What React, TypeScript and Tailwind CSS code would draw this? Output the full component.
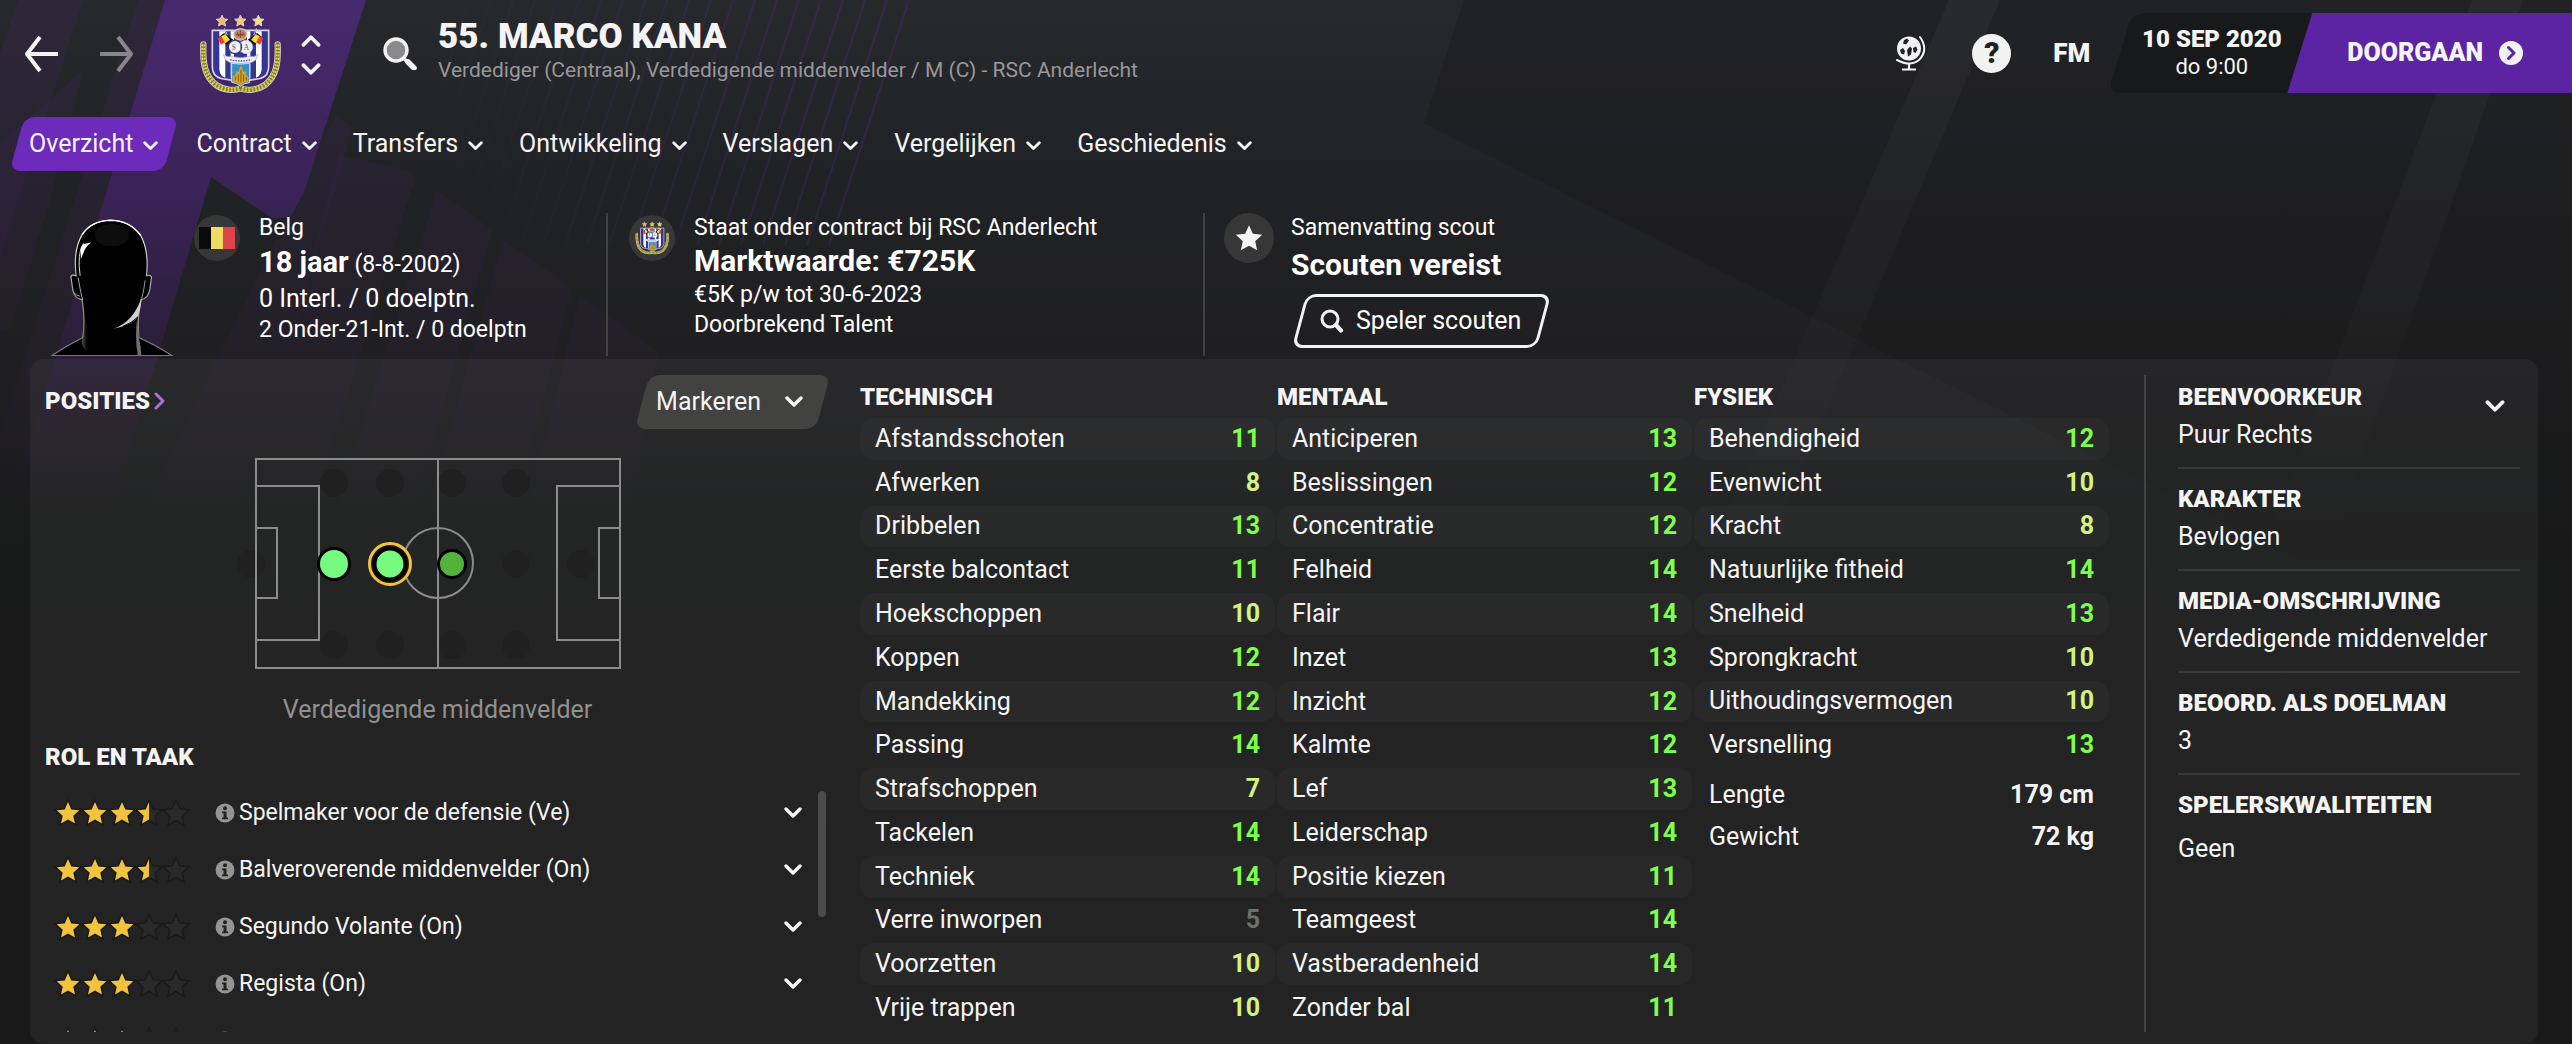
import type { ReactNode } from "react";

type Row = [string, number];

const NAV = ["Overzicht", "Contract", "Transfers", "Ontwikkeling", "Verslagen", "Vergelijken", "Geschiedenis"];

const TECHNICAL: Row[] = [
  ["Afstandsschoten", 11],
  ["Afwerken", 8],
  ["Dribbelen", 13],
  ["Eerste balcontact", 11],
  ["Hoekschoppen", 10],
  ["Koppen", 12],
  ["Mandekking", 12],
  ["Passing", 14],
  ["Strafschoppen", 7],
  ["Tackelen", 14],
  ["Techniek", 14],
  ["Verre inworpen", 5],
  ["Voorzetten", 10],
  ["Vrije trappen", 10],
];

const MENTAL: Row[] = [
  ["Anticiperen", 13],
  ["Beslissingen", 12],
  ["Concentratie", 12],
  ["Felheid", 14],
  ["Flair", 14],
  ["Inzet", 13],
  ["Inzicht", 12],
  ["Kalmte", 12],
  ["Lef", 13],
  ["Leiderschap", 14],
  ["Positie kiezen", 11],
  ["Teamgeest", 14],
  ["Vastberadenheid", 14],
  ["Zonder bal", 11],
];

const PHYSICAL: Row[] = [
  ["Behendigheid", 12],
  ["Evenwicht", 10],
  ["Kracht", 8],
  ["Natuurlijke fitheid", 14],
  ["Snelheid", 13],
  ["Sprongkracht", 10],
  ["Uithoudingsvermogen", 10],
  ["Versnelling", 13],
];

const ROLES: Row[] = [
  ["Spelmaker voor de defensie (Ve)", 3.5],
  ["Balveroverende middenvelder (On)", 3.5],
  ["Segundo Volante (On)", 3],
  ["Regista (On)", 3],
  ["", 3],
];

const FACTS = [
  ["BEENVOORKEUR", "Puur Rechts"],
  ["KARAKTER", "Bevlogen"],
  ["MEDIA-OMSCHRIJVING", "Verdedigende middenvelder"],
  ["BEOORD. ALS DOELMAN", "3"],
];

function valueColor(v: number) {
  if (v > 10) return "text-[#7dff4b]";
  if (v > 6) return "text-[#d3f284]";
  return "text-[#6f6f6f]";
}

const LINES = Array.from({ length: 21 }, (_, i) => 469 + i * 22);

function Backdrop() {
  return (
    <svg
      className="absolute inset-0 -z-10 h-full w-full"
      viewBox="0 0 2572 1044"
      preserveAspectRatio="none"
      aria-hidden="true"
    >
      <defs>
        <linearGradient id="base" x1="0" y1="0" x2="0" y2="1">
          <stop offset="0" stopColor="#27282c" />
          <stop offset="0.18" stopColor="#212225" />
          <stop offset="0.34" stopColor="#1f1f21" />
          <stop offset="0.52" stopColor="#191a1a" />
          <stop offset="1" stopColor="#191919" />
        </linearGradient>
        <linearGradient id="band" gradientUnits="userSpaceOnUse" x1="0" y1="0" x2="0" y2="540">
          <stop offset="0" stopColor="#48296f" />
          <stop offset="0.35" stopColor="#3a2357" />
          <stop offset="0.66" stopColor="#2a1e38" />
          <stop offset="1" stopColor="#191919" stopOpacity="0" />
        </linearGradient>
        <linearGradient id="faint" gradientUnits="userSpaceOnUse" x1="0" y1="0" x2="0" y2="520">
          <stop offset="0" stopColor="#40265c" stopOpacity="0.28" />
          <stop offset="0.6" stopColor="#36224a" stopOpacity="0.2" />
          <stop offset="1" stopColor="#36224a" stopOpacity="0" />
        </linearGradient>
        <linearGradient id="line" gradientUnits="userSpaceOnUse" x1="450" y1="220" x2="910" y2="0">
          <stop offset="0" stopColor="#3d2757" stopOpacity="0" />
          <stop offset="1" stopColor="#3d2757" />
        </linearGradient>
        <linearGradient id="stripe" gradientUnits="userSpaceOnUse" x1="0" y1="0" x2="0" y2="560">
          <stop offset="0" stopColor="#ffffff" stopOpacity="0.035" />
          <stop offset="1" stopColor="#ffffff" stopOpacity="0" />
        </linearGradient>
      </defs>
      <rect width="2572" height="1044" fill="url(#base)" />
      <path d="M1464 0H2572V560H2300L1424 123Z" fill="#141416" fillOpacity="0.28" />
      <path d="M1949 0H2000L1780 520H1725Z" fill="url(#stripe)" />
      <path d="M2472 0H2523L2340 520H2275Z" fill="url(#stripe)" />
      <path d="M18 0H83L-30 350H-100Z" fill="url(#faint)" />
      <path d="M138 0H165L10 530H-30Z" fill="url(#faint)" />
      <path d="M83 70L50 200L10 330H-30L0 145Z" fill="url(#faint)" />
      <path d="M165 0H366L304 192L290 218L272 218L211 177L103 540H0Z" fill="url(#band)" />
      <path d="M336 115L352 128L238 520H140Z" fill="url(#faint)" />
      <path d="M340 155L413 172L415 178L308 520H240Z" fill="url(#faint)" />
      <path d="M437 190L492 230L400 560H320Z" fill="url(#faint)" />
      <path d="M503 240L572 288L500 560H415Z" fill="url(#faint)" />
      <path d="M580 296L658 352L620 560H515Z" fill="url(#faint)" />
      {LINES.map((x) => (
        <line key={x} x1={x} y1="0" x2={x - 80} y2="245" stroke="url(#line)" strokeWidth="2" strokeOpacity="0.75" />
      ))}
    </svg>
  );
}

function Chevron({ className = "h-[10px] w-[14px]", up = false }: { className?: string; up?: boolean }) {
  return (
    <svg className={`shrink-0 ${className}`} viewBox="0 0 18 12" fill="none" aria-hidden="true">
      <path
        d={up ? "M2 10L9 3L16 10" : "M2 2L9 9L16 2"}
        stroke="currentColor"
        strokeWidth="3.4"
        strokeLinecap="round"
        strokeLinejoin="round"
      />
    </svg>
  );
}

const STAR = "M12 1l3.3 7.4 8 .9-6 5.4 1.7 7.9L12 18.600l-7 4 1.700-7.900-6-5.400 8-.900z";

function Crest({ className }: { className: string }) {
  return (
    <svg className={className} viewBox="55 38 246 246" role="img" aria-label="RSC Anderlecht">
      <defs>
        <path id="laurel" d="M68 132C66 190 72 228 106 254C130 270 160 272 179 264" />
        <path id="laurel-r" d="M291 132C293 190 287 228 253 254C229 270 199 272 180 264" />
      </defs>
      <g fill="none" strokeLinecap="round">
        <g stroke="#cfcbc6" strokeWidth="19">
          <use href="#laurel" />
          <use href="#laurel-r" />
        </g>
        <g stroke="#77732c" strokeWidth="13">
          <use href="#laurel" />
          <use href="#laurel-r" />
        </g>
        <g stroke="#e2d94e" strokeWidth="12" strokeLinecap="butt" strokeDasharray="6 4">
          <use href="#laurel" />
          <use href="#laurel-r" />
        </g>
        <g stroke="#8f8a2c" strokeWidth="2">
          <use href="#laurel" />
          <use href="#laurel-r" />
        </g>
      </g>
      <path
        d="M95 90H264V198Q264 236 222 237Q190 240 180 252Q168 240 138 237Q95 236 95 198Z"
        fill="#34368f"
        stroke="#d7d3e2"
        strokeWidth="5"
      />
      <path d="M116 93H134V232Q118 226 116 208Z" fill="#fff" />
      <path d="M243 93H226V232Q241 226 243 208Z" fill="#fff" />
      <path d="M150 93H160V232H150ZM199 93H209V232H199Z" fill="#fff" />
      <path d="M112 112L130 98L158 118L138 134Z" fill="#111" />
      <path d="M120 109L134 101L148 118L132 130Z" fill="#f4d93c" />
      <path d="M111 114L122 107L132 126L121 133Z" fill="#e8403a" />
      <path d="M247 112L229 98L201 118L221 134Z" fill="#111" />
      <path d="M239 109L225 101L211 118L227 130Z" fill="#f4d93c" />
      <path d="M248 114L237 107L227 126L238 133Z" fill="#e8403a" />
      <path d="M131 84L140 104M228 84L219 104" stroke="#c9c6cf" strokeWidth="3" />
      <ellipse cx="179" cy="102" rx="20" ry="17" fill="#b98868" stroke="#d6d0cc" strokeWidth="4" />
      <path d="M166 103h26M179 90v22M170 96l4 12M188 96l-4 12" stroke="#7e3f33" strokeWidth="3" />
      <path d="M164 115h30" stroke="#e2a23c" strokeWidth="4" />
      <circle cx="196" cy="140" r="20" fill="#f2f2f6" stroke="#c9cbd8" strokeWidth="2" />
      <circle cx="163" cy="140" r="20" fill="#f2f2f6" stroke="#2c3a78" strokeWidth="4" />
      <text x="153" y="148" fontFamily="Liberation Serif, serif" fontSize="23" fill="#3c4a94">
        S
      </text>
      <text x="189" y="148" fontFamily="Liberation Serif, serif" fontSize="22" fill="#3c4a94">
        A
      </text>
      <path d="M180 122V158" stroke="#6b7190" strokeWidth="3" />
      <path
        d="M128 162Q140 172 150 168Q180 176 210 168Q220 172 232 162L226 178L214 186Q180 194 146 186L134 178Z"
        fill="#f0eff5"
        stroke="#a7a4c6"
        strokeWidth="2"
      />
      <path d="M148 178Q180 186 212 178" stroke="#5359a8" strokeWidth="4" strokeDasharray="5 3" fill="none" />
      <path d="M153 189Q180 194 207 189V247Q190 248 180 257Q168 248 153 246Z" fill="#3391c9" stroke="#d7d3e2" strokeWidth="3" />
      <path
        d="M156 245V228L164 224L168 212L174 216L178 198L184 200L187 214L194 212L196 224L203 230V244Q190 246 180 253Q168 246 156 245Z"
        fill="#dba325"
      />
      <path d="M164 240V228M173 244V222M181 247V208M189 244V222M197 240V230" stroke="#6f4c12" strokeWidth="2.5" />
      {[124, 179, 233].map((cx, i) => (
        <path
          key={cx}
          transform={`translate(${cx - 18} 43) scale(1.5)`}
          d={STAR}
          fill={["#f3b955", "#f7ca5f", "#f9e072"][i]}
          stroke="#dcd5d2"
          strokeWidth="2"
        />
      ))}
    </svg>
  );
}

function Head() {
  return (
    <svg className="mt-[6px] block h-[137px] w-[122px]" viewBox="93 55 366 413" role="img" aria-label="Marco Kana">
      <defs>
        <linearGradient id="rim" x1="0" y1="0" x2="0" y2="1">
          <stop offset="0" stopColor="#fff" />
          <stop offset="0.5" stopColor="#a8a8a8" />
          <stop offset="1" stopColor="#777" />
        </linearGradient>
        <linearGradient id="neck" x1="0" y1="0" x2="1" y2="0">
          <stop offset="0" stopColor="#888" stopOpacity="0.7" />
          <stop offset="1" stopColor="#000" stopOpacity="0" />
        </linearGradient>
        <filter id="soft">
          <feGaussianBlur stdDeviation="2" />
        </filter>
      </defs>
      <path
        d="M94 467Q140 436 188 412Q196 360 186 298Q164 296 158 270L152 228Q156 222 168 226Q158 150 186 102Q214 60 272 58Q330 60 362 104Q388 150 380 226Q392 222 395 230L390 268Q384 296 364 298Q352 340 357 412Q410 436 458 467Z"
        fill="#000"
        stroke="url(#rim)"
        strokeWidth="3.5"
      />
      <path d="M186 102Q214 60 272 59Q330 60 362 104" fill="none" stroke="#fff" strokeWidth="4" />
      <path d="M180 226Q170 160 190 128" fill="none" stroke="#ddd" strokeWidth="3" filter="url(#soft)" />
      <path d="M182 140L190 130L214 126Q198 136 192 152L182 176Z" fill="#fff" filter="url(#soft)" />
      <path d="M174 232Q182 280 188 300M160 276Q168 286 180 288" fill="none" stroke="#aaa" strokeWidth="3" />
      <path d="M376 240Q372 270 366 294" fill="none" stroke="#999" strokeWidth="3" />
      <path
        d="M280 386Q340 366 366 290Q362 330 354 350Q346 364 320 374Q298 384 280 386Z"
        fill="#d0d0d0"
        filter="url(#soft)"
      />
      <path d="M310 378Q340 366 354 350" fill="none" stroke="#000" strokeWidth="3" />
      <path d="M187 410Q180 440 204 458L206 400L192 340Z" fill="url(#neck)" />
      <path d="M352 350L357 412Q364 440 364 466H354Q344 420 352 350Z" fill="#6f6f6f" filter="url(#soft)" />
      <ellipse cx="275" cy="104" rx="52" ry="34" fill="#0b0b0b" filter="url(#soft)" />
    </svg>
  );
}

function SearchLens({ className, fill }: { className: string; fill: string }) {
  return (
    <svg className={className} viewBox="0 0 34 34" aria-hidden="true">
      <circle cx="13" cy="14" r="11" fill={fill} stroke="#f2f2f2" strokeWidth="3.4" />
      <path d="M21.500 23L24 25.500" stroke="#f2f2f2" strokeWidth="3.500" />
      <path d="M25 26L31 32" stroke="#f2f2f2" strokeWidth="5.500" strokeLinecap="round" />
    </svg>
  );
}

function Globe() {
  return (
    <svg className="h-9 w-8" viewBox="0 0 32 36" fill="none" aria-hidden="true">
      <circle cx="14" cy="13.500" r="12" fill="#f2f2f2" />
      <path
        d="M9 5l3-1.500 2 2-3 4-3-1zM5 15l3-2 2 3-1 3.500-3-1zM12 15l3-3.500 2 2-1 6-3 2zM18 13l3-1.500 1.500 3-2 3.500-2-1z"
        fill="#212225"
      />
      <path
        d="M25 2Q34 15 24 25Q15 32 2 25"
        stroke="#f2f2f2"
        strokeWidth="2"
        strokeLinecap="round"
      />
      <path d="M14 28V34M7 34.500H21" stroke="#f2f2f2" strokeWidth="2.200" />
    </svg>
  );
}

function Stars({ value }: { value: number }) {
  return (
    <span className="flex gap-[3px]" role="img" aria-label={`${value} van 5 sterren`}>
      {[0, 1, 2, 3, 4].map((i) => {
        const part = Math.min(1, Math.max(0, value - i));
        return (
          <svg key={i} className="h-6 w-6 overflow-visible" viewBox="0 0 24 24" aria-hidden="true">
            <path d={STAR} fill={part === 1 ? "#f2c33f" : "#2a2a2a"} stroke="#1a1a1a" strokeWidth="3" paintOrder="stroke" />
            {part === 0.5 && <path d="M12 1V18.600l-7 4 1.700-7.900-6-5.400 8-.900z" fill="#f2c33f" />}
          </svg>
        );
      })}
    </span>
  );
}

const EMPTY_SPOTS: [number, number][] = [
  [83, 25],
  [139, 25],
  [201, 25],
  [265, 25],
  [83, 187],
  [139, 187],
  [201, 187],
  [265, 187],
  [0, 106],
  [265, 106],
  [330, 106],
];

function Pitch() {
  return (
    <svg className="mx-auto block h-[212px] w-[394px]" viewBox="-14 0 394 212" fill="none" role="img" aria-label="Posities op het veld">
      {EMPTY_SPOTS.map(([x, y]) => (
        <circle key={`${x}-${y}`} cx={x} cy={y} r="14" fill="#1f1f1f" fillOpacity="0.8" />
      ))}
      <g stroke="#8c8c8c" strokeWidth="2">
        <rect x="5" y="1" width="364" height="209" />
        <path d="M187 1V210M5 28H68V182H5M5 70H26V140H5M369 28H306V182H369M369 70H348V140H369" />
        <circle cx="187" cy="105" r="35" />
      </g>
      <circle cx="83" cy="106" r="15.500" fill="#76fb80" stroke="#000" strokeWidth="3" />
      <circle cx="139" cy="106" r="20.500" fill="#1a1a1a" stroke="#f2c33f" strokeWidth="3" />
      <circle cx="139" cy="106" r="15.500" fill="#76fb80" stroke="#000" strokeWidth="4" />
      <circle cx="201" cy="106" r="13.500" fill="#53b23a" stroke="#000" strokeWidth="3" />
    </svg>
  );
}

function AttributeTable({ title, rows, children }: { title: string; rows: Row[]; children?: ReactNode }) {
  return (
    <section className="min-w-0 flex-1">
      <h2 className="h-[43px] pt-2 text-[24px] leading-7 font-black">{title}</h2>
      <table
        className={`w-full border-separate border-spacing-0 text-[25px] leading-7 ${rows.length === 14 ? "h-[613px]" : "h-[350px]"}`}
        aria-label={title}
      >
        <tbody>
          {rows.map(([name, v], i) => (
            <tr key={name}>
              <th
                scope="row"
                className={`rounded-l-[14px] border-b-2 border-transparent bg-clip-padding py-0 pl-[15px] text-left font-normal ${i % 2 === 0 ? "bg-white/[0.025]" : ""}`}
              >
                {name}
              </th>
              <td
                className={`rounded-r-[14px] border-b-2 border-transparent bg-clip-padding py-0 pr-[15px] text-right font-bold ${valueColor(v)} ${i % 2 === 0 ? "bg-white/[0.025]" : ""}`}
              >
                {v}
              </td>
            </tr>
          ))}
        </tbody>
      </table>
      {children}
    </section>
  );
}

function InfoIcon() {
  return (
    <svg className="h-5 w-5 shrink-0" viewBox="0 0 20 20" aria-hidden="true">
      <circle cx="10" cy="10" r="9.500" fill="#949494" />
      <circle cx="10" cy="5.200" r="2" fill="#232323" />
      <path d="M7 8.500h4.500v6h1.500v1.800H7v-1.800h1.500v-4.200H7z" fill="#232323" />
    </svg>
  );
}

export default function App() {
  return (
    <div className="relative isolate flex h-screen flex-col overflow-hidden bg-[#191919] font-['Roboto',sans-serif] text-[#f4f4f4]">
      <Backdrop />

      <header className="flex h-[106px] shrink-0 items-start pl-[23px]">
        <button type="button" aria-label="Terug" className="mt-[35px] text-[#f4f4f4]">
          <svg className="h-[38px] w-9" viewBox="0 0 36 38" fill="none" stroke="currentColor" strokeWidth="4">
            <path d="M17 2L4 19L17 36M4 19H35" strokeLinejoin="round" />
          </svg>
        </button>
        <button type="button" aria-label="Vooruit" className="mt-[35px] ml-10 text-[#88858c]">
          <svg className="h-[38px] w-9" viewBox="0 0 36 38" fill="none" stroke="currentColor" strokeWidth="4">
            <path d="M19 2L32 19L19 36M32 19H1" strokeLinejoin="round" />
          </svg>
        </button>
        <Crest className="mt-[13px] ml-16 h-[82px] w-[82px]" />
        <div className="mt-[34px] ml-[20px] flex flex-col gap-4">
          <button type="button" aria-label="Vorige speler" className="flex">
            <Chevron up className="h-[13px] w-5" />
          </button>
          <button type="button" aria-label="Volgende speler" className="flex">
            <Chevron className="h-[13px] w-5" />
          </button>
        </div>
        <button type="button" aria-label="Zoeken" className="mt-[36px] ml-[62px]">
          <SearchLens className="h-[34px] w-[34px]" fill="#8a8a8d" />
        </button>
        <div className="ml-[21px] pt-4">
          <h1 className="text-[35px] leading-[42px] font-black">55. MARCO KANA</h1>
          <p className="text-[21px] leading-6 text-[#98989a]">
            Verdediger (Centraal), Verdedigende middenvelder / M (C) - RSC Anderlecht
          </p>
        </div>

        <div className="mt-[13px] ml-auto flex h-20 items-center">
          <button type="button" aria-label="Wereld" className="mr-[45px]">
            <Globe />
          </button>
          <button
            type="button"
            aria-label="Help"
            className="flex h-[39px] w-[39px] items-center justify-center rounded-full bg-[#f2f2f2] text-[30px] leading-8 font-black text-[#212225]"
          >
            ?
          </button>
          <button type="button" className="ml-[42px] text-[26px] leading-7 font-black">
            FM
          </button>
          <div className="relative isolate ml-5 flex h-20 w-[203px] flex-col items-center justify-center before:absolute before:inset-y-0 before:-right-3 before:left-[10px] before:-z-10 before:-skew-x-[17deg] before:rounded-l-xl before:bg-[#18191a]">
            <span className="text-[24px] leading-7 font-black">10 SEP 2020</span>
            <span className="text-[22px] leading-7">do 9:00</span>
          </div>
          <button
            type="button"
            className="-ml-[26px] flex h-20 items-center gap-4 bg-[#5c24a3] pr-[49px] pl-[60px] text-[25px] font-black [clip-path:polygon(25px_0,100%_0,100%_100%,0_100%)]"
          >
            DOORGAAN
            <svg className="h-6 w-6" viewBox="0 0 24 24" fill="none" aria-hidden="true">
              <circle cx="12" cy="12" r="12" fill="#f2f2f2" />
              <path d="M9.500 6.500L15 12L9.500 17.500" stroke="#5c24a3" strokeWidth="3" strokeLinecap="round" strokeLinejoin="round" />
            </svg>
          </button>
        </div>
      </header>

      <nav className="mt-[11px] flex h-[54px] shrink-0 pl-[11px] text-[25px] leading-8" aria-label="Speler">
        {NAV.map((label, i) => (
          <button
            key={label}
            type="button"
            className={`relative isolate flex items-center gap-[10px] px-[18px] ${
              i === 0
                ? "mr-[2px] before:absolute before:inset-y-0 before:right-[5px] before:left-[6px] before:-z-10 before:-skew-x-[15deg] before:rounded-[10px] before:bg-[#6c2bbb]"
                : ""
            }`}
          >
            {label}
            <Chevron className="mt-1 h-[10px] w-[15px]" />
          </button>
        ))}
      </nav>

      <section className="mt-[42px] flex h-[143px] shrink-0 text-[23px] leading-[30px] text-white" aria-label="Spelersinfo">
        <div className="flex w-[608px] border-r-2 border-[#414143] pl-[51px]">
          <Head />
          <div className="mt-0.5 ml-[21px] flex h-[46px] w-[46px] items-center justify-center rounded-full bg-[#373737]">
            <svg className="h-[22px] w-9" viewBox="0 0 36 22" role="img" aria-label="België">
              <path d="M0 0h12v22H0z" fill="#0a0a0a" />
              <path d="M12 0h12v22H12z" fill="#f0dc62" />
              <path d="M24 0h12v22H24z" fill="#dc4449" />
            </svg>
          </div>
          <div className="ml-[19px] flex flex-col">
            <p>Belg</p>
            <p className="mt-px">
              <strong className="text-[29px] leading-9 font-bold">18 jaar</strong> (8-8-2002)
            </p>
            <p className="mt-1 text-[25px]">0 Interl. / 0 doelptn.</p>
            <p className="mt-px">2 Onder-21-Int. / 0 doelptn</p>
          </div>
        </div>
        <div className="flex w-[597px] border-r-2 border-[#414143] pl-[21px]">
          <div className="mt-0.5 flex h-[46px] w-[46px] items-center justify-center rounded-full bg-[#373737]">
            <Crest className="h-[34px] w-[34px]" />
          </div>
          <div className="ml-[19px] flex flex-col">
            <p>Staat onder contract bij RSC Anderlecht</p>
            <p className="text-[30px] leading-9 font-bold">Marktwaarde: €725K</p>
            <p className="mt-px">€5K p/w tot 30-6-2023</p>
            <p>Doorbrekend Talent</p>
          </div>
        </div>
        <div className="flex pl-[19px]">
          <div className="flex h-[50px] w-[50px] items-center justify-center rounded-full bg-[#373737]">
            <svg className="h-7 w-7" viewBox="0 0 24 24" aria-hidden="true">
              <path d={STAR} fill="#f4f4f4" />
            </svg>
          </div>
          <div className="ml-[17px] flex flex-col items-start">
            <p>Samenvatting scout</p>
            <p className="mt-1 text-[30px] leading-9 font-bold">Scouten vereist</p>
            <button
              type="button"
              className="relative isolate mt-[11px] flex h-[54px] items-center gap-3 px-[29px] text-[25px] before:absolute before:inset-y-0 before:right-[6px] before:left-[8px] before:-z-10 before:-skew-x-[15deg] before:rounded-[10px] before:border-[3px] before:border-[#f2f2f2]"
            >
              <svg className="h-6 w-6" viewBox="0 0 24 24" fill="none" stroke="#f2f2f2" aria-hidden="true">
                <circle cx="10" cy="10" r="8" strokeWidth="3" />
                <path d="M16 16L21 21.500" strokeWidth="4.200" strokeLinecap="round" />
              </svg>
              Speler scouten
            </button>
          </div>
        </div>
      </section>

      <main className="mt-[3px] mr-[34px] ml-[30px] flex min-h-0 flex-1 overflow-hidden rounded-[14px] bg-white/[0.044] pt-4 pr-[18px] pb-3">
        <section className="flex w-[799px] shrink-0 flex-col">
          <div className="flex items-start justify-between">
            <h2 className="pt-3 pl-[15px] text-[24px] leading-7 font-black">
              <a href="#posities" className="flex items-center gap-1">
                POSITIES
                <svg className="h-[18px] w-[11px]" viewBox="0 0 11 18" fill="none" aria-hidden="true">
                  <path d="M2 2L9 9L2 16" stroke="#a273dc" strokeWidth="3" strokeLinecap="round" strokeLinejoin="round" />
                </svg>
              </a>
            </h2>
            <button
              type="button"
              className="relative isolate flex h-[54px] items-center gap-6 pr-[26px] pl-5 text-[25px] leading-8 before:absolute before:inset-y-0 before:right-[6px] before:left-[6px] before:-z-10 before:-skew-x-[15deg] before:rounded-[10px] before:bg-[#424341]"
            >
              Markeren
              <Chevron className="h-3 w-[18px]" />
            </button>
          </div>
          <div className="mt-[29px] pl-2">
            <Pitch />
            <p className="mt-6 pl-2 text-center text-[25px] leading-8 text-[#909090]">Verdedigende middenvelder</p>
          </div>
          <h2 className="mt-[17px] pl-[15px] text-[24px] leading-7 font-black">ROL EN TAAK</h2>
          <div className="mt-[13px] flex min-h-0 flex-1">
            <ul className="min-w-0 flex-1 overflow-hidden">
              {ROLES.map(([name, v], i) => (
                <li key={i} className="flex h-[57px] items-center pr-4 pl-[26px] text-[23px] leading-7">
                  <Stars value={v} />
                  <span className="ml-[27px] flex items-center gap-1">
                    <InfoIcon />
                    {name}
                  </span>
                  <button type="button" aria-label={`Details ${name}`} className="ml-auto flex">
                    <Chevron className="h-3 w-[18px]" />
                  </button>
                </li>
              ))}
            </ul>
            <div className="mt-[7px] mr-[3px] h-[126px] w-[8px] rounded-full bg-[#4b4b4b]" />
          </div>
        </section>

        <div className="mr-[35px] ml-[31px] flex min-w-0 flex-1 gap-[2px]">
          <AttributeTable title="TECHNISCH" rows={TECHNICAL} />
          <AttributeTable title="MENTAAL" rows={MENTAL} />
          <AttributeTable title="FYSIEK" rows={PHYSICAL}>
            <dl className="mt-[6px] grid grid-cols-2 px-[15px] text-[25px] leading-[42px]">
              <dt>Lengte</dt>
              <dd className="text-right font-bold">179 cm</dd>
              <dt>Gewicht</dt>
              <dd className="text-right font-bold">72 kg</dd>
            </dl>
          </AttributeTable>
        </div>

        <aside className="relative w-[376px] shrink-0 border-l-2 border-[#434344] pl-8">
          <button type="button" aria-label="Uitklappen" className="absolute top-[25px] right-[15px] flex">
            <Chevron className="h-[13px] w-5" />
          </button>
          {FACTS.map(([title, text]) => (
            <section key={title} className="mb-2 h-[94px] border-b-2 border-[#38393a]">
              <h2 className="pt-2 text-[24px] leading-7 font-black">{title}</h2>
              <p className="mt-2 text-[25px] leading-8">{text}</p>
            </section>
          ))}
          <section>
            <h2 className="pt-2 text-[24px] leading-7 font-black">SPELERSKWALITEITEN</h2>
            <p className="mt-[14px] text-[25px] leading-8">Geen</p>
          </section>
        </aside>
      </main>
    </div>
  );
}
